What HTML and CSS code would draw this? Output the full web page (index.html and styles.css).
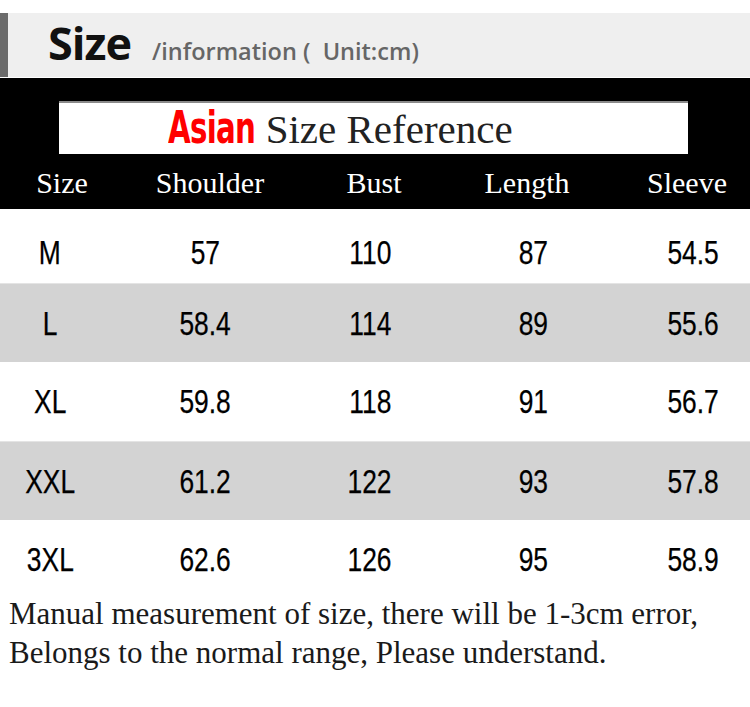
FILE: index.html
```html
<!DOCTYPE html>
<html>
<head>
<meta charset="utf-8">
<link rel="stylesheet" href="styles.css">
</head>
<body>
<div class="page">
  <div class="top">
    <span class="top-title">Size</span>
    <span class="top-sub">/information (&nbsp; Unit:cm)</span>
  </div>
  <div class="chart">
    <div class="banner"><span class="asian">Asian</span><span class="ref">Size Reference</span></div>
    <div class="head">
      <div class="hcell">Size</div>
      <div class="hcell">Shoulder</div>
      <div class="hcell">Bust</div>
      <div class="hcell">Length</div>
      <div class="hcell hlast">Sleeve</div>
    </div>
  </div>
  <div class="rows">
    <div class="row first"><div class="cell"><span>M</span></div><div class="cell"><span>57</span></div><div class="cell"><span>110</span></div><div class="cell"><span>87</span></div><div class="cell"><span>54.5</span></div></div>
    <div class="row alt"><div class="cell"><span>L</span></div><div class="cell"><span>58.4</span></div><div class="cell"><span>114</span></div><div class="cell"><span>89</span></div><div class="cell"><span>55.6</span></div></div>
    <div class="row"><div class="cell"><span>XL</span></div><div class="cell"><span>59.8</span></div><div class="cell"><span>118</span></div><div class="cell"><span>91</span></div><div class="cell"><span>56.7</span></div></div>
    <div class="row alt"><div class="cell"><span>XXL</span></div><div class="cell"><span>61.2</span></div><div class="cell"><span>122</span></div><div class="cell"><span>93</span></div><div class="cell"><span>57.8</span></div></div>
    <div class="row last"><div class="cell"><span>3XL</span></div><div class="cell"><span>62.6</span></div><div class="cell"><span>126</span></div><div class="cell"><span>95</span></div><div class="cell"><span>58.9</span></div></div>
  </div>
  <div class="note">
    <div>Manual measurement of size, there will be 1-3cm error,</div>
    <div>Belongs to the normal range, Please understand.</div>
  </div>
</div>
</body>
</html>
```

FILE: styles.css
```css
* { box-sizing: border-box; }
html, body { margin: 0; padding: 0; background: #ffffff; }
.page { width: 750px; overflow: hidden; }

.top {
  margin-top: 13px;
  height: 64px;
  background: #efefef;
  border-left: 8px solid #6b6b6b;
  display: flex;
  align-items: baseline;
  padding-left: 40px;
  font-family: "Open Sans", "Noto Sans", sans-serif;
}
.top-title {
  font-size: 45px;
  line-height: 59px;
  font-weight: 700;
  letter-spacing: -1px;
  color: #111;
}
.top-sub {
  margin-left: 21px;
  font-size: 23.5px;
  font-weight: 600;
  color: #666;
}

.chart {
  margin-top: 1px;
  background: #000;
  height: 131px;
  padding-top: 23px;
}
.banner {
  margin-left: 59px;
  width: 629px;
  height: 53px;
  background: #fff;
  border-top: 2px solid #8a8a8a;
  padding-left: 109px;
  display: flex;
  align-items: baseline;
  line-height: 50px;
  white-space: nowrap;
}
.asian {
  display: inline-block;
  font-family: "DejaVu Sans Condensed", "DejaVu Sans", sans-serif;
  font-stretch: condensed;
  font-weight: 700;
  font-size: 44px;
  color: #ff0000;
  letter-spacing: -1px;
  transform: scaleX(0.74);
  transform-origin: left bottom;
  margin-right: -20px;
}
.ref {
  display: inline-block;
  font-family: "Liberation Serif", serif;
  font-size: 41px;
  color: #222;
}

.head {
  display: grid;
  grid-template-columns: 124px 172px 156px 150px 148px;
  padding-top: 3px;
  line-height: 52px;
  font-family: "Liberation Serif", serif;
  font-size: 30px;
  color: #fff;
}
.hcell { text-align: center; }
.hlast { padding-left: 22px; }

.row {
  display: grid;
  grid-template-columns: 100px 210px 120px 206px 114px;
  height: 79px;
  line-height: 79px;
  font-family: "Liberation Sans", Arial, sans-serif;
  font-size: 33px;
  color: #000;
  background: #fff;
  -webkit-text-stroke: 0.25px #000;
}
.row.first { height: 74px; padding-top: 14px; line-height: 60px; }
.row.last { height: 80px; line-height: 80px; }
.row.alt { background: #d3d3d3; border-top: 1px solid #e4e4e4; }
.cell { text-align: center; }
.cell span { display: inline-block; transform: scaleX(0.8); }

.note {
  margin-top: -6px;
  padding-left: 9px;
  font-family: "Liberation Serif", serif;
  font-size: 31px;
  line-height: 39px;
  color: #1a1a1a;
}
```
